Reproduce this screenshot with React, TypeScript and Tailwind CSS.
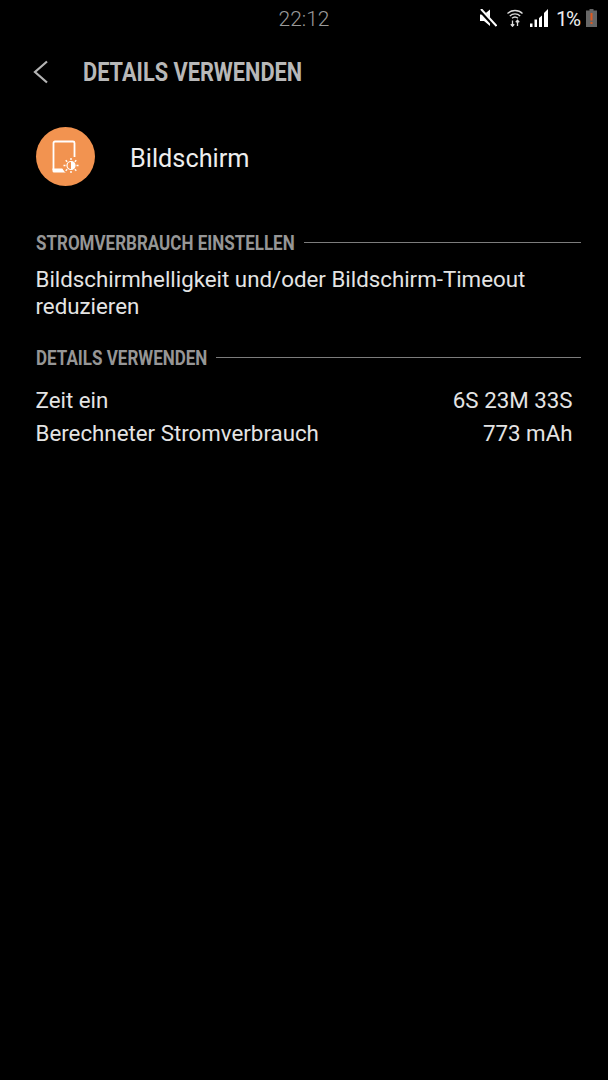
function StatusIcons() {
  return (
    <div className="flex items-center">
      {/* muted speaker */}
      <svg width="18" height="18" viewBox="0 0 18 18" className="mr-[10px]">
        <path d="M1 5.500h4L11 .5V17l-6-5H1z" fill="#fff" />
        <path d="M1 1l16 17" stroke="#000" strokeWidth="4" />
        <path d="M2 0l15.500 17" stroke="#fff" strokeWidth="2" />
      </svg>
      {/* wifi */}
      <svg width="16" height="18" viewBox="0 0 16 18" className="mr-[7px]" fill="none" stroke="#dcdcdc">
        <path d="M.5 4.500C4.500.5 11.500.5 15.500 4.500" strokeWidth="1.300" />
        <path d="M2.800 7C5.800 4.200 10.200 4.200 13.200 7" strokeWidth="1.300" />
        <path d="M5 9.300C6.800 7.700 9.200 7.700 11 9.300" strokeWidth="1.300" />
        <path d="M5.500 11.500V17M3.800 15.300l1.700 1.900 1.700-1.900M10.500 17v-5.500M8.800 13.200l1.700-1.900 1.700 1.900" strokeWidth="1.300" />
      </svg>
      {/* signal */}
      <svg width="18" height="18" viewBox="0 0 18 18" className="mr-[8px]" fill="#fff">
        <path d="M0 18h2.500v-3.500H0zM4.500 18H7v-7.500H4.500zM9 18h3V6.500L9 9zM14 18h4V0l-4 4z" />
      </svg>
      <span className="mr-[6px] w-[24px] whitespace-nowrap pt-[3px] font-['Roboto',sans-serif] text-[20.5px] leading-none tracking-[-1.6px] text-[#eeeeee]">1%</span>
      {/* battery */}
      <svg width="11" height="18" viewBox="0 0 11 18">
        <path d="M3.500 0h4v1.500H11V18H0V1.500h3.500z" fill="#666666" />
        <path d="M4.500 4h2v7.500h-2zM4.500 13h2v2h-2z" fill="#e0591f" />
      </svg>
    </div>
  );
}

function SectionHeading({ label, widthClass }: { label: string; widthClass: string }) {
  return (
    <div className="flex h-[24px] items-center gap-[9px]">
      <div className={widthClass}>
        <span className="inline-block origin-left scale-x-[0.85] whitespace-nowrap text-[20px] font-bold leading-[24px] text-[#969696]">
          {label}
        </span>
      </div>
      <div className="mb-[4px] h-px flex-1 bg-[#7c7c7c]" />
    </div>
  );
}

function UsageRow({ label, value }: { label: string; value: string }) {
  return (
    <div className="flex h-[33px] items-center justify-between pr-[8.500px] text-[22.3px] text-[#e4e4e4]">
      <span>{label}</span>
      <span>{value}</span>
    </div>
  );
}

export default function App() {
  return (
    <div className="min-h-[1080px] w-[608px] bg-black font-['Roboto',sans-serif]">
      <div className="relative flex h-[36px] items-center justify-end pr-[11px]">
        <span className="absolute left-0 right-0 pt-[4px] text-center text-[21px] font-light text-[#9a9a9a]">22:12</span>
        <StatusIcons />
      </div>

      <header className="flex h-[72px] items-center pl-[33px]">
        <svg width="16" height="24" viewBox="0 0 16 24" fill="none" stroke="#b4b4b4" strokeWidth="2.200" className="-mt-[1px]">
          <path d="M14 1.500L2 12l12 10.500" />
        </svg>
        <h1 className="ml-[34px] mt-[1px] origin-left scale-x-[0.87] whitespace-nowrap text-[25px] font-bold text-[#b8b8b8]">DETAILS VERWENDEN</h1>
      </header>

      <div className="mt-[19px] flex items-center pl-[36px]">
        <div className="flex h-[59px] w-[59px] items-center justify-center rounded-full bg-[#f29350]">
          <svg width="30" height="34" viewBox="0 0 30 34" fill="none">
            <path d="M2.500 30V3A1.500 1.500 0 0 1 4 1.500h18A1.500 1.500 0 0 1 23.500 3V17" stroke="#fff" strokeWidth="1.800" />
            <path d="M1.500 28.500h10l3.500 4H3A1.500 1.500 0 0 1 1.500 31z" fill="#fff" />
            <circle cx="20" cy="25.500" r="9" fill="#f29350" />
            <path d="M20 21.500a4 4 0 0 1 0 8z" fill="#fff" />
            <circle cx="20" cy="25.500" r="4" stroke="#fff" strokeWidth="1.200" />
            <path d="M20 18v2M20 31v2M12.500 25.500h2M25.500 25.500h2M14.700 20.200l1.500 1.500M23.800 29.300l1.500 1.500M14.700 30.800l1.500-1.500M23.800 21.700l1.500-1.500" stroke="#fff" strokeWidth="1.400" />
          </svg>
        </div>
        <span className="ml-[35px] pt-[4px] text-[25.3px] text-[#eeeeee]">Bildschirm</span>
      </div>

      <section className="mt-[46px] pl-[35.500px] pr-[27px]">
        <SectionHeading label="STROMVERBRAUCH EINSTELLEN" widthClass="w-[259.500px]" />
        <p className="mt-[10px] text-[22.3px] leading-[26.500px] text-[#e4e4e4]">
          Bildschirmhelligkeit und/oder Bildschirm-Timeout reduzieren
        </p>
      </section>

      <section className="mt-[28px] pl-[35.500px] pr-[27px]">
        <SectionHeading label="DETAILS VERWENDEN" widthClass="w-[171.500px]" />
        <div className="mt-[13px]">
          <UsageRow label="Zeit ein" value="6S 23M 33S" />
          <UsageRow label="Berechneter Stromverbrauch" value="773 mAh" />
        </div>
      </section>
    </div>
  );
}
